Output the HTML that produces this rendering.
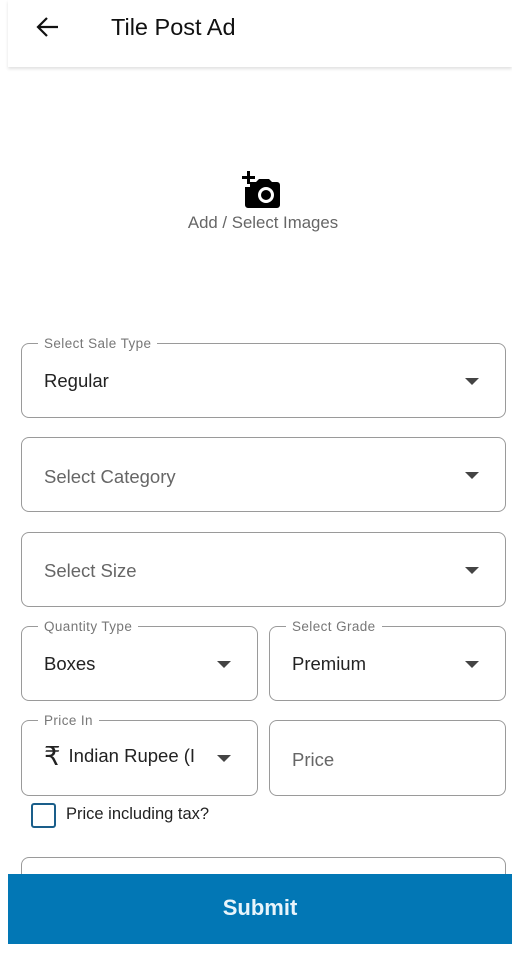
<!DOCTYPE html>
<html><head><style>
*{margin:0;padding:0;box-sizing:border-box}
body{width:512px;height:956px;background:#fff;position:relative;overflow:hidden;font-family:"Liberation Sans","DejaVu Sans",sans-serif}
.hdr{position:absolute;left:8px;top:0;width:504px;height:67px;background:#fff;box-shadow:0 2px 3px rgba(0,0,0,.12)}
.box{position:absolute;border:1.5px solid #9a9a9a;border-radius:8px}
.lbl{position:absolute;top:-7px;left:16px;background:#fff;padding:0 6px;font-size:13.5px;color:#777;letter-spacing:.4px;line-height:13px}
.val{position:absolute;left:22px;top:26px;font-size:18.5px;color:#222}
.ph{color:#666}
.arr{position:absolute;right:26px;top:34px;width:0;height:0;border-left:7px solid transparent;border-right:7px solid transparent;border-top:7px solid #444}
</style></head><body>
<div class="hdr"></div>
<svg style="position:absolute;left:36px;top:16px" width="24" height="22" viewBox="0 0 24 22"><path d="M22 11H3M11 2L2 11l9 9" fill="none" stroke="#111" stroke-width="2.2"/></svg>
<div style="position:absolute;left:111px;top:14px;font-size:23.5px;color:#111">Tile Post Ad</div>
<svg style="position:absolute;left:242px;top:171px" width="44" height="38" viewBox="0 0 44 38"><path d="M5 0h3v5h5v3H8v5H5V8H0V5h5z" fill="#000"/><path d="M11 11v0h3l3-3h10l3 3h5a3 3 0 0 1 3 3v20a3 3 0 0 1-3 3H6a3 3 0 0 1-3-3V16h5v-5z" fill="#000"/><circle cx="24" cy="24" r="6.5" fill="none" stroke="#fff" stroke-width="3"/></svg>
<div style="position:absolute;left:0;width:526px;top:213px;text-align:center;font-size:16.8px;color:#666">Add / Select Images</div>

<div class="box" style="left:21px;top:343px;width:485px;height:75px"><div class="lbl">Select Sale Type</div><div class="val">Regular</div><div class="arr"></div></div>
<div class="box" style="left:21px;top:437px;width:485px;height:75px"><div class="val ph" style="top:28px">Select Category</div><div class="arr"></div></div>
<div class="box" style="left:21px;top:532px;width:485px;height:75px"><div class="val ph" style="top:27px">Select Size</div><div class="arr"></div></div>
<div class="box" style="left:21px;top:626px;width:237px;height:75px"><div class="lbl">Quantity Type</div><div class="val">Boxes</div><div class="arr"></div></div>
<div class="box" style="left:269px;top:626px;width:237px;height:75px"><div class="lbl">Select Grade</div><div class="val">Premium</div><div class="arr"></div></div>
<div class="box" style="left:21px;top:720px;width:237px;height:76px"><div class="lbl">Price In</div><div class="val" style="left:22px;top:20px;font-size:26px">₹<span style="font-size:18.5px;position:relative;top:-3px;margin-left:8px">Indian Rupee (I</span></div><div class="arr"></div></div>
<div class="box" style="left:269px;top:720px;width:237px;height:76px"><div class="val ph" style="top:28px">Price</div></div>
<div style="position:absolute;left:31px;top:803px;width:25px;height:25px;border:2.5px solid #1a5e8a;border-radius:3px"></div>
<div style="position:absolute;left:66px;top:805px;font-size:16.5px;color:#222">Price including tax?</div>
<div class="box" style="left:21px;top:857px;width:485px;height:60px"></div>
<div style="position:absolute;left:8px;top:874px;width:504px;height:70px;background:#0277b5;color:#e8f4fb;font-size:22px;font-weight:bold;text-align:center;line-height:68px">Submit</div>
<div style="position:absolute;left:0;top:944px;width:512px;height:12px;background:#fff"></div>
</body></html>
